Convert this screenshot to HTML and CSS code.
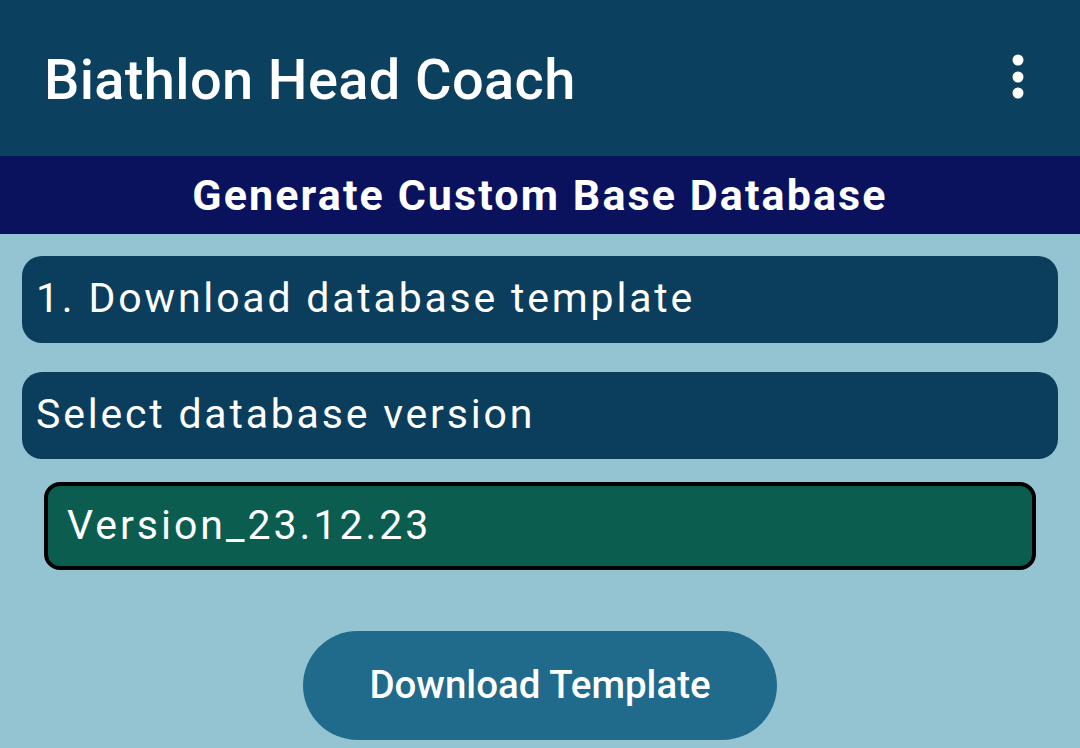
FILE: index.html
```html
<!DOCTYPE html>
<html>
<head>
<meta charset="utf-8">
<link rel="stylesheet" href="styles.css">
</head>
<body>
<header class="appbar">
  <h1 class="title">Biathlon Head Coach</h1>
  <svg class="menu" width="14" height="48" viewBox="0 0 14 48">
    <circle cx="7" cy="7" r="5.5" fill="#fff"/>
    <circle cx="7" cy="24" r="5.5" fill="#fff"/>
    <circle cx="7" cy="40" r="5.5" fill="#fff"/>
  </svg>
</header>
<div class="subbar">Generate Custom Base Database</div>
<main class="content">
  <div class="card">1. Download database template</div>
  <div class="card">Select database version</div>
  <div class="select">Version_23.12.23</div>
  <div class="actions">
    <button class="btn">Download Template</button>
  </div>
</main>
</body>
</html>
```
FILE: styles.css
```css
html, body {
  margin: 0;
  padding: 0;
}
body {
  width: 1080px;
  height: 748px;
  overflow: hidden;
  background: #94c3d2;
  font-family: Roboto, "Noto Sans", sans-serif;
  color: #fff;
}
.appbar {
  height: 156px;
  background: #0b405e;
  display: flex;
  align-items: center;
  justify-content: space-between;
  padding: 0 55px 0 44px;
  box-sizing: border-box;
}
.title {
  margin: 0;
  font-size: 56px;
  font-weight: 500;
  line-height: 1;
  letter-spacing: 0.35px;
  margin-top: 4px;
}
.menu {
  display: block;
  margin-top: -2px;
}
.subbar {
  height: 78px;
  background: #0a125e;
  display: flex;
  align-items: center;
  justify-content: center;
  font-size: 43px;
  font-weight: 700;
  letter-spacing: 2.1px;
}
.content {
  padding: 22px 22px 0 22px;
  display: flex;
  flex-direction: column;
}
.card {
  height: 87px;
  background: #0b3d5c;
  border-radius: 20px;
  display: flex;
  align-items: center;
  padding-left: 14px;
  font-size: 41px;
  letter-spacing: 2.8px;
  margin-bottom: 29px;
  box-sizing: border-box;
  padding-bottom: 4px;
}
.select {
  margin: -6px 22px 0 22px;
  height: 88px;
  background: #0b5e4f;
  border: 4px solid #000;
  border-radius: 16px;
  box-sizing: border-box;
  display: flex;
  align-items: center;
  padding-left: 19px;
  padding-bottom: 3px;
  font-size: 41px;
  letter-spacing: 3px;
}
.actions {
  display: flex;
  justify-content: center;
  margin-top: 61px;
}
.btn {
  width: 474px;
  height: 109px;
  border: none;
  border-radius: 55px;
  background: #206b8b;
  color: #fff;
  font-family: Roboto, "Noto Sans", sans-serif;
  font-size: 38.5px;
  font-weight: 500;
  padding: 0 0 2px 0;
}
```
